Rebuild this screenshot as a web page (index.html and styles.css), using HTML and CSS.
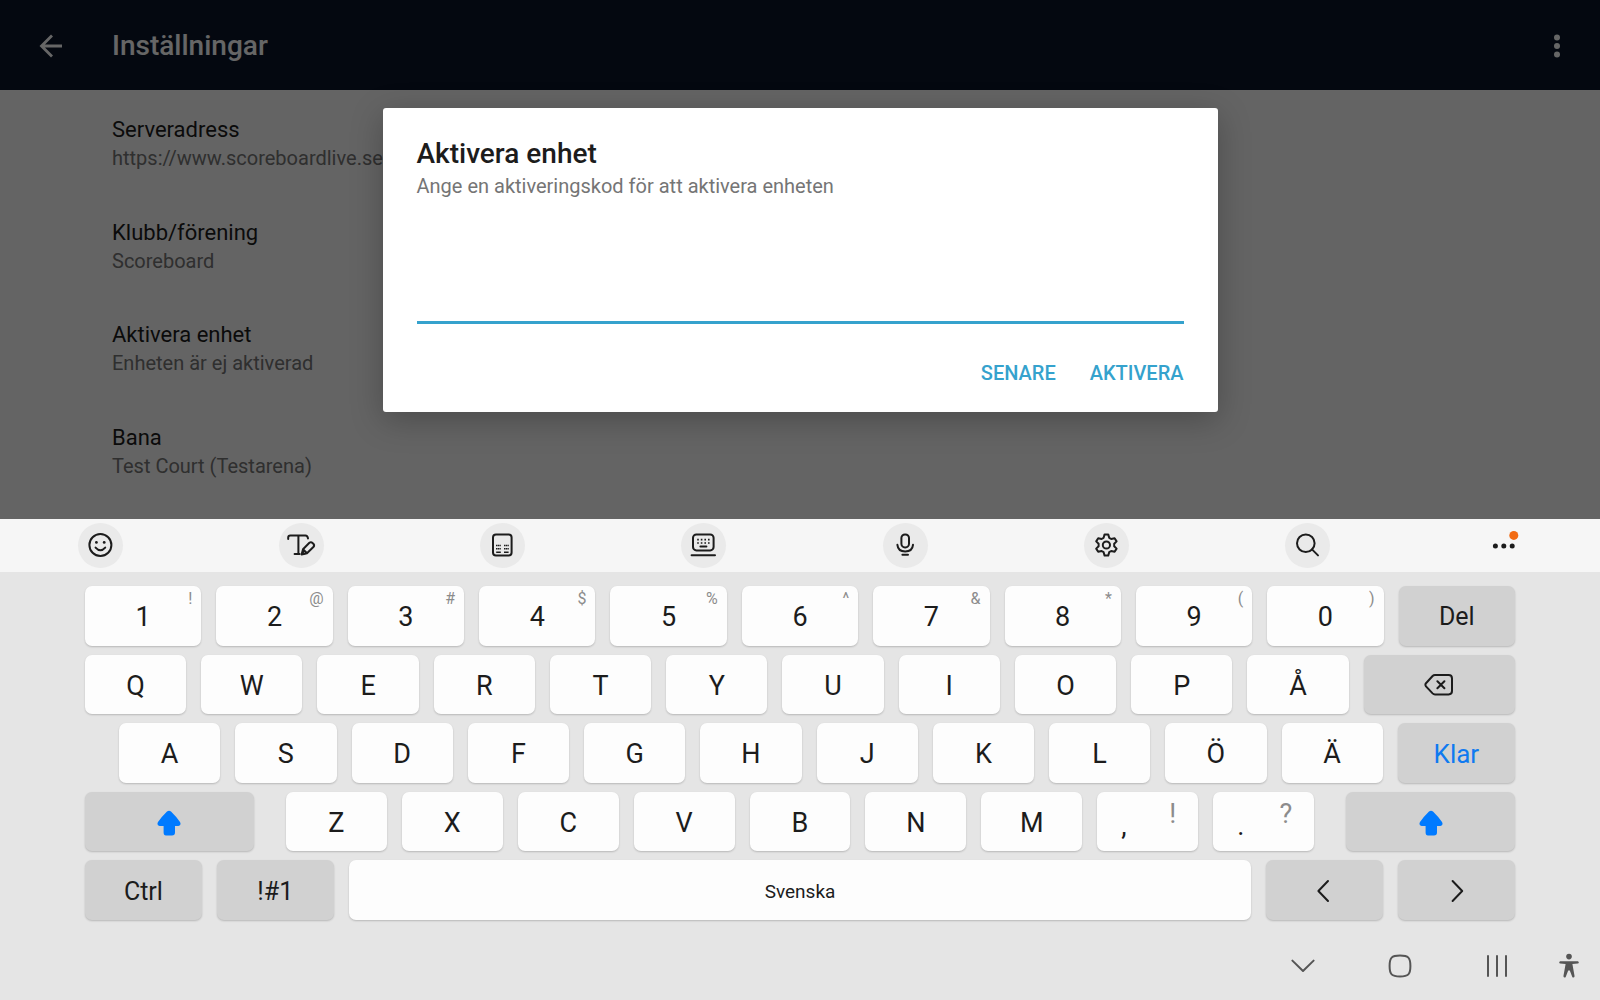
FILE: index.html
```html
<!DOCTYPE html>
<html lang="sv">
<head>
    <meta charset="UTF-8">
    <meta name="viewport" content="width=device-width, initial-scale=1.0">
    <title>Inställningar</title>
    <link rel="stylesheet" href="styles.css">
</head>
<body>

    <div class="app">
        <header class="app-bar">
            <button type="button" class="icon-button" aria-label="Tillbaka">
                <svg width="24" height="24" viewBox="0 0 24 24" fill="none" stroke="currentColor" stroke-width="2.8"><path d="M23 12H2.5M13 1.5L2.5 12L13 22.5"/></svg>
            </button>
            <h1>Inställningar</h1>
            <button type="button" class="icon-button" aria-label="Meny">
                <svg width="24" height="24" viewBox="0 0 24 24" fill="currentColor"><circle cx="12" cy="3.5" r="3"/><circle cx="12" cy="12" r="3"/><circle cx="12" cy="20.5" r="3"/></svg>
            </button>
        </header>

        <ul class="settings">
            <li><h2>Serveradress</h2><p>https://www.scoreboardlive.se</p></li>
            <li><h2>Klubb/förening</h2><p>Scoreboard</p></li>
            <li><h2>Aktivera enhet</h2><p>Enheten är ej aktiverad</p></li>
            <li><h2>Bana</h2><p>Test Court (Testarena)</p></li>
        </ul>

        <div class="overlay">
            <form class="dialog" role="dialog" aria-labelledby="dialogTitle">
                <h2 id="dialogTitle">Aktivera enhet</h2>
                <label for="activationCode">Ange en aktiveringskod för att aktivera enheten</label>
                <input type="text" id="activationCode" name="activationCode">
                <div class="dialog-actions">
                    <button type="button">SENARE</button>
                    <button type="submit">AKTIVERA</button>
                </div>
            </form>
        </div>
    </div>

    <div class="keyboard">
        <div class="toolbar">
            <button type="button" aria-label="Emoji">
                <svg viewBox="0 0 45 45"><circle cx="22.4" cy="22" r="11"/><path d="M17.6 24.6Q22.4 30 27.2 24.6"/><g class="solid"><circle cx="18.4" cy="19.4" r="1.4"/><circle cx="26.2" cy="19.4" r="1.4"/></g></svg>
            </button>
            <button type="button" aria-label="Handskrift">
                <svg viewBox="0 0 45 45"><path d="M9.2 16V14.6Q9.2 12.4 11.4 12.4H26.4Q28.6 12.4 29 15.4M19.4 12.4V31M15.6 31H20.6"/><path d="M22.6 31.6L24 26.2L30.4 19.8Q32 18.6 33.6 20Q36 22 34.6 23.8L28 30.2ZM24 26.2L28 30.2"/><path class="solid" d="M22.3 32L23.4 27.8L26.8 31Z"/></svg>
            </button>
            <button type="button" aria-label="Knappsats">
                <svg viewBox="0 0 45 45"><rect x="13" y="11.4" width="18.6" height="21.2" rx="3"/><path class="thin" d="M16 22.5H20.8M24 22.5H28.8M16 25.8H20.8M24 25.8H28.8" stroke-dasharray="1.4 0.4"/><path class="thin" d="M16.2 29.2H20.8M24 29.2H28.6"/></svg>
            </button>
            <button type="button" aria-label="Tangentbordsläge">
                <svg viewBox="0 0 45 45"><rect x="12" y="11.4" width="20.6" height="16" rx="3.4"/><path class="dots" d="M16.2 16.6H30M16.2 20H30"/><path d="M19.4 23.6H25.4M10.6 32.2H34"/></svg>
            </button>
            <button type="button" aria-label="Röstinmatning">
                <svg viewBox="0 0 45 45"><rect x="18.4" y="11.4" width="7.6" height="13" rx="3.6"/><path d="M14.4 21.8Q15 28.4 22.2 28.4Q29.4 28.4 30 21.8M19.4 31.8H25"/></svg>
            </button>
            <button type="button" aria-label="Inställningar för tangentbord">
                <svg viewBox="0 0 45 45"><circle cx="22.4" cy="22" r="3.6"/><path d="M20.6 11.4H24.2L25.2 14.8L27.2 16L30.6 15.2L32.6 18.4L30.2 20.8V23.2L32.6 25.6L30.6 28.8L27.2 28L25.2 29.2L24.2 32.6H20.6L19.6 29.2L17.6 28L14.2 28.8L12.2 25.6L14.6 23.2V20.8L12.2 18.4L14.2 15.2L17.6 16L19.6 14.8Z"/></svg>
            </button>
            <button type="button" aria-label="Sök">
                <svg viewBox="0 0 45 45"><circle cx="20.8" cy="20.2" r="8.8"/><path d="M27 26.4L33 32.4"/></svg>
            </button>
            <button type="button" class="more" aria-label="Mer">
                <svg viewBox="0 0 45 45"><g class="solid"><circle cx="9.4" cy="23" r="2.5"/><circle cx="17.8" cy="23" r="2.5"/><circle cx="26.2" cy="23" r="2.5"/></g><circle class="notice" cx="27.8" cy="12.4" r="4.5"/></svg>
            </button>
        </div>

        <div class="keys">
            <div class="row numbers">
                <button type="button">1<sup>!</sup></button>
                <button type="button">2<sup>@</sup></button>
                <button type="button">3<sup>#</sup></button>
                <button type="button">4<sup>$</sup></button>
                <button type="button">5<sup>%</sup></button>
                <button type="button">6<sup>^</sup></button>
                <button type="button">7<sup>&amp;</sup></button>
                <button type="button">8<sup>*</sup></button>
                <button type="button">9<sup>(</sup></button>
                <button type="button">0<sup>)</sup></button>
                <button type="button" class="action">Del</button>
            </div>
            <div class="row">
                <button type="button">Q</button>
                <button type="button">W</button>
                <button type="button">E</button>
                <button type="button">R</button>
                <button type="button">T</button>
                <button type="button">Y</button>
                <button type="button">U</button>
                <button type="button">I</button>
                <button type="button">O</button>
                <button type="button">P</button>
                <button type="button">Å</button>
                <button type="button" class="action backspace" aria-label="Backsteg">
                    <svg width="30" height="24" viewBox="0 0 30 24"><path d="M11 2H24.6Q28 2 28 5.4V18Q28 21.4 24.6 21.4H11Q9.6 21.4 8.6 20.4L2 13.4Q.8 11.8 2 10.2L8.6 3Q9.6 2 11 2ZM13.4 8.2L20.4 15.2M20.4 8.2L13.4 15.2"/></svg>
                </button>
            </div>
            <div class="row home">
                <button type="button">A</button>
                <button type="button">S</button>
                <button type="button">D</button>
                <button type="button">F</button>
                <button type="button">G</button>
                <button type="button">H</button>
                <button type="button">J</button>
                <button type="button">K</button>
                <button type="button">L</button>
                <button type="button">Ö</button>
                <button type="button">Ä</button>
                <button type="button" class="action done">Klar</button>
            </div>
            <div class="row">
                <button type="button" class="action shift" aria-label="Skift">
                    <svg class="arrow" width="24" height="26" viewBox="0 0 24 26"><path d="M10 1.6Q12 0 14 1.6Q19 6.4 23 12Q24.6 15.6 21.4 16H18V22.4Q18 25.4 15 25.4H9Q6.6 25.4 6.6 22.4V16H2.6Q-.6 15.6 1 12Q5 6.4 10 1.6Z"/></svg>
                </button>
                <button type="button">Z</button>
                <button type="button">X</button>
                <button type="button">C</button>
                <button type="button">V</button>
                <button type="button">B</button>
                <button type="button">N</button>
                <button type="button">M</button>
                <button type="button" class="pair"><span>,</span><span>!</span></button>
                <button type="button" class="pair"><span>.</span><span>?</span></button>
                <button type="button" class="action shift" aria-label="Skift">
                    <svg class="arrow" width="24" height="26" viewBox="0 0 24 26"><path d="M10 1.6Q12 0 14 1.6Q19 6.4 23 12Q24.6 15.6 21.4 16H18V22.4Q18 25.4 15 25.4H9Q6.6 25.4 6.6 22.4V16H2.6Q-.6 15.6 1 12Q5 6.4 10 1.6Z"/></svg>
                </button>
            </div>
            <div class="row bottom">
                <button type="button" class="action">Ctrl</button>
                <button type="button" class="action">!#1</button>
                <button type="button" class="space">Svenska</button>
                <button type="button" class="action" aria-label="Vänster">
                    <svg width="24" height="24" viewBox="0 0 24 24"><path d="M15 2L5.4 12L15 22"/></svg>
                </button>
                <button type="button" class="action" aria-label="Höger">
                    <svg width="24" height="24" viewBox="0 0 24 24"><path d="M7.6 2L17.2 12L7.6 22"/></svg>
                </button>
            </div>
        </div>

        <nav class="nav-bar">
            <button type="button" aria-label="Dölj tangentbord">
                <svg width="24" height="24" viewBox="0 0 24 24"><path d="M1.4 6.6L12 17L22.6 6.6"/></svg>
            </button>
            <button type="button" aria-label="Hem">
                <svg width="24" height="24" viewBox="0 0 24 24"><path d="M12 1.6C20.4 1.6 22.4 3.6 22.4 12S20.4 22.4 12 22.4S1.6 20.4 1.6 12S3.6 1.6 12 1.6Z"/></svg>
            </button>
            <button type="button" aria-label="Senaste">
                <svg width="24" height="24" viewBox="0 0 24 24"><path d="M3 2V22M12 2V22M21 2V22"/></svg>
            </button>
            <button type="button" class="accessibility" aria-label="Tillgänglighet">
                <svg width="24" height="26" viewBox="0 0 24 26"><circle cx="12" cy="3.6" r="2.8"/><path d="M3.2 8.2H20.8Q21.8 8.4 21.8 9.4T20.8 10.6L15.4 11L17.6 23.2Q17 25.4 15.4 24.2L12.8 17.4H11.2L8.6 24.2Q7 25.4 6.4 23.2L8.6 11L3.2 10.6Q2.2 10.4 2.2 9.4T3.2 8.2Z"/></svg>
            </button>
        </nav>
    </div>

</body>
</html>
```
FILE: styles.css
```css
* {
    box-sizing: border-box;
}

body {
    margin: 0;
    min-height: 100vh;
    display: flex;
    flex-direction: column;
    font-family: Roboto, sans-serif;
    color: #1c1c1c;
    background-color: #e5e5e5;
}

h1, h2, p, ul {
    margin: 0;
    padding: 0;
}

button {
    border: none;
    padding: 0;
    background: none;
    color: inherit;
    font-family: inherit;
    cursor: pointer;
}

svg {
    display: block;
}

/* settings screen */
.app {
    position: relative;
    flex: 519 1 0;
    display: flex;
    flex-direction: column;
    background-color: #fafafa;
}

.app-bar {
    display: flex;
    align-items: center;
    height: 90px;
    padding: 1px 31px 0 39px;
    background-color: #0a162a;
    color: #fff;
}

.app-bar h1 {
    flex: 1;
    margin-left: 49px;
    font-size: 28px;
    font-weight: 500;
}

.settings {
    flex: 1;
    display: grid;
    grid-template-rows: repeat(4, 1fr);
    padding: 3px 0 16px 112px;
    list-style: none;
}

.settings li {
    display: flex;
    flex-direction: column;
    justify-content: center;
}

.settings h2 {
    font-size: 22px;
    font-weight: 400;
    line-height: 28px;
}

.settings p {
    font-size: 20px;
    line-height: 28px;
    color: #757575;
}

/* dialog */
.overlay {
    position: absolute;
    inset: 0;
    display: grid;
    place-items: center;
    background-color: rgba(0, 0, 0, 0.6);
}

.dialog {
    display: flex;
    flex-direction: column;
    width: 835px;
    max-width: 90%;
    padding: 29px 34px 25px;
    border-radius: 3px;
    background-color: #fff;
    box-shadow: 0 8px 32px rgba(0, 0, 0, 0.25);
}

.dialog h2 {
    font-size: 28px;
    font-weight: 500;
    line-height: 33px;
}

.dialog label {
    margin-top: 2px;
    font-size: 20px;
    line-height: 28px;
    color: #757575;
}

.dialog input {
    height: 56px;
    margin-top: 68px;
    padding: 0;
    border: none;
    border-bottom: 3px solid #35a2cd;
    outline: none;
    background: none;
    font-family: inherit;
    font-size: 22px;
}

.dialog-actions {
    display: flex;
    justify-content: flex-end;
    gap: 34px;
    margin-top: 35px;
}

.dialog-actions button {
    font-size: 20px;
    font-weight: 500;
    line-height: 28px;
    color: #35a2cd;
}

/* keyboard */
.keyboard {
    flex: 481 1 0;
    display: flex;
    flex-direction: column;
}

.keyboard svg {
    fill: none;
    stroke: currentColor;
    stroke-width: 2;
    stroke-linecap: round;
    stroke-linejoin: round;
}

.toolbar {
    display: flex;
    align-items: center;
    justify-content: space-between;
    height: 53px;
    padding: 0 69px 0 78px;
    background-color: #f6f6f6;
}

.toolbar button {
    width: 45px;
    height: 45px;
    border-radius: 50%;
    background-color: #eaeaea;
}

.toolbar .more {
    background: none;
}

.keyboard .solid {
    fill: currentColor;
    stroke: none;
}

.keyboard .notice {
    fill: #f26b13;
    stroke: none;
}

.keyboard .thin {
    stroke-linecap: butt;
    stroke-width: 1.5;
}

.keyboard .dots {
    stroke-linecap: butt;
    stroke-width: 1.6;
    stroke-dasharray: 1.6 2;
}

.keys {
    flex: 1;
    display: grid;
    grid-template-rows: repeat(5, 1fr);
    gap: 9px;
    padding: 14px 85px 0;
}

.row {
    display: flex;
    gap: 15px;
}

.home {
    padding-left: 34px;
}

.row button {
    position: relative;
    flex: 101 1 0;
    display: flex;
    align-items: center;
    justify-content: center;
    padding-top: 3px;
    border-radius: 7px;
    background-color: #fdfdfd;
    box-shadow: 0 1px 2px rgba(0, 0, 0, 0.2);
    font-size: 27px;
}

.row .action {
    padding-top: 2px;
    background-color: #d1d1d1;
    font-size: 25px;
}

.row .backspace {
    flex-grow: 151;
}

.row .done {
    flex-grow: 117;
    font-size: 26px;
    color: #0f7af0;
}

.row .shift {
    flex-grow: 169;
}

.row .shift:first-child {
    margin-right: 17px;
}

.row .shift:last-child {
    margin-left: 17px;
}

.bottom .action {
    flex-grow: 117;
}

.row .space {
    flex-grow: 904;
    font-size: 19px;
}

.row sup {
    position: absolute;
    top: 4px;
    right: 9px;
    font-size: 16px;
    line-height: 18px;
    color: #8c8c8c;
}

.row .pair {
    justify-content: space-between;
}

.pair span:first-child {
    padding-top: 6px;
    margin-left: 24px;
}

.pair span:last-child {
    padding-bottom: 18px;
    margin-right: 22px;
    color: #8c8c8c;
}

.row .arrow {
    fill: #007aff;
    stroke: none;
}

/* system navigation */
.nav-bar {
    display: flex;
    align-items: center;
    justify-content: flex-end;
    height: 80px;
    padding: 12px 8px 0 0;
    color: #555;
}

.nav-bar button {
    display: grid;
    place-items: center;
    width: 97px;
    height: 48px;
}

.nav-bar .accessibility {
    width: 47px;
}

.nav-bar .accessibility svg {
    fill: currentColor;
    stroke: none;
}
```
